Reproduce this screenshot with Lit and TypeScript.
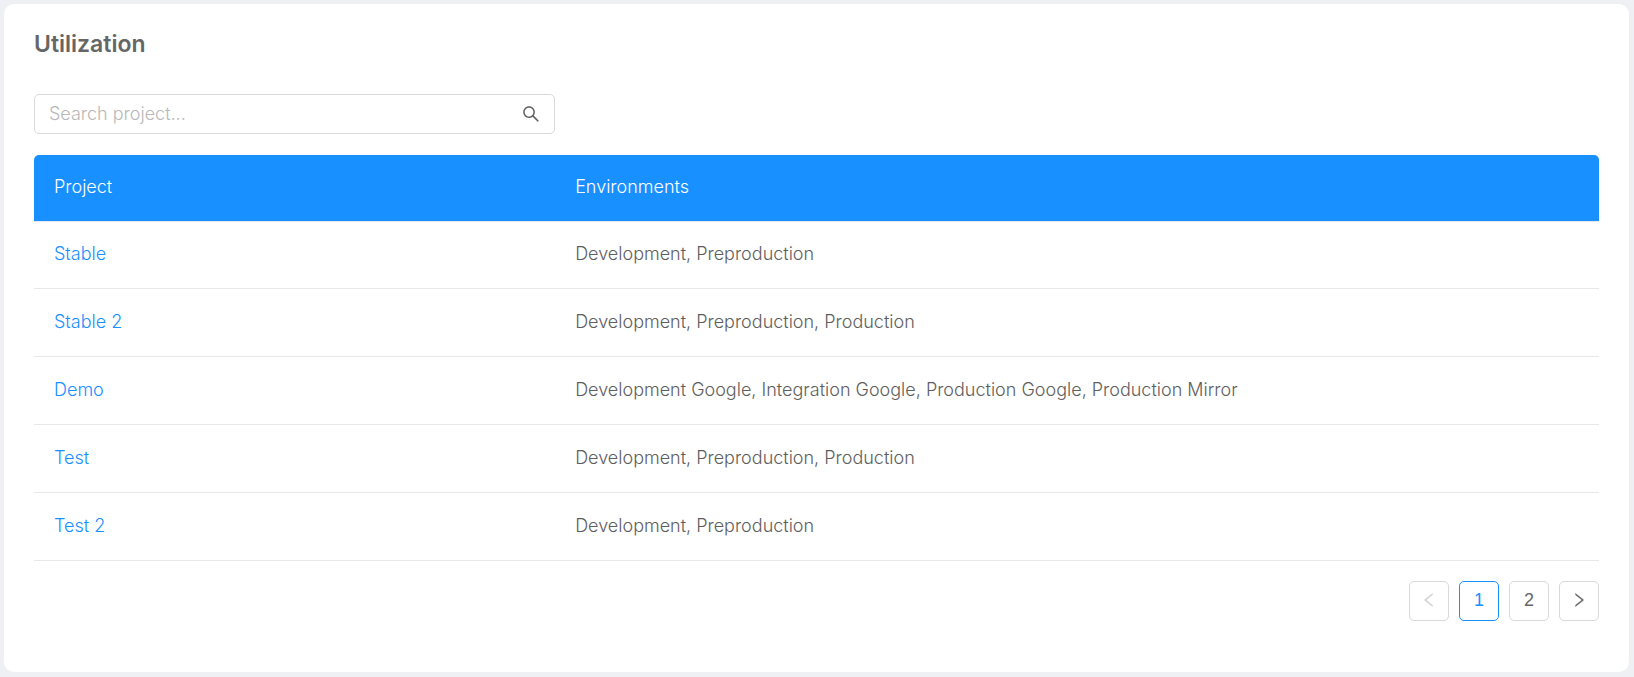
import { LitElement, html, css, svg } from "lit";
import { customElement, property, state } from "lit/decorators.js";

interface ProjectRow {
  name: string;
  environments: string[];
}

const PROJECTS: ProjectRow[] = [
  { name: "Stable", environments: ["Development", "Preproduction"] },
  { name: "Stable 2", environments: ["Development", "Preproduction", "Production"] },
  {
    name: "Demo",
    environments: [
      "Development Google",
      "Integration Google",
      "Production Google",
      "Production Mirror",
    ],
  },
  { name: "Test", environments: ["Development", "Preproduction", "Production"] },
  { name: "Test 2", environments: ["Development", "Preproduction"] },
];

const ICONS = {
  search: svg`<path d="M909.6 854.5L649.9 594.8C690.2 542.7 712 479 712 412c0-80.2-31.3-155.4-87.9-212.1-56.6-56.7-132-87.9-212.1-87.9s-155.5 31.3-212.1 87.9C143.2 256.5 112 331.8 112 412c0 80.1 31.3 155.5 87.9 212.1C256.5 680.8 331.8 712 412 712c67 0 130.6-21.8 182.7-62l259.7 259.6a8.2 8.2 0 0011.6 0l43.6-43.5a8.2 8.2 0 000-11.6zM570.4 570.4C528 612.7 471.8 636 412 636s-116-23.3-158.4-65.6C211.3 528 188 471.8 188 412s23.3-116.1 65.6-158.4C296 211.3 352.2 188 412 188s116.1 23.2 158.4 65.6S636 352.2 636 412s-23.3 116.1-65.6 158.4z"/>`,
  left: svg`<path d="M724 218.3V141c0-6.7-7.7-10.4-12.9-6.3L260.3 486.8a31.86 31.86 0 000 50.3l450.8 352.1c5.3 4.1 12.9.4 12.9-6.3v-77.3c0-4.9-2.3-9.6-6.1-12.6l-360-281 360-281.1c3.8-3 6.1-7.7 6.1-12.6z"/>`,
  right: svg`<path d="M765.7 486.8L314.9 134.7A7.97 7.97 0 00302 141v77.3c0 4.9 2.3 9.6 6.1 12.6l360 281.1-360 281.1c-3.9 3-6.1 7.7-6.1 12.6V883c0 6.7 7.7 10.4 12.9 6.3l450.8-352.1a31.96 31.96 0 000-50.4z"/>`,
};

@customElement("ui-icon")
export class UiIcon extends LitElement {
  @property() name: keyof typeof ICONS = "search";

  static styles = css`
    :host {
      display: inline-flex;
      width: 18px;
      height: 18px;
    }
    .glyph {
      width: 100%;
      height: 100%;
      fill: currentColor;
    }
  `;

  render() {
    return html`<svg class="glyph" viewBox="0 0 1024 1024" aria-hidden="true">
      ${ICONS[this.name]}
    </svg>`;
  }
}

@customElement("page-nav")
export class PageNav extends LitElement {
  @property({ type: Number }) pages = 1;
  @property({ type: Number }) current = 1;

  static styles = css`
    :host {
      display: block;
    }
    .pager {
      display: flex;
      justify-content: flex-end;
      gap: 10px;
    }
    .item {
      display: flex;
      align-items: center;
      justify-content: center;
      width: 40px;
      height: 40px;
      padding: 0 0 2px;
      box-sizing: border-box;
      border: 1px solid #d9d9d9;
      border-radius: 5px;
      background: #fff;
      color: #666;
      font: 18px/28px "Liberation Sans", Arial, sans-serif;
      cursor: pointer;
    }
    .item.active {
      border-color: #1890ff;
      color: #1890ff;
    }
    .item:disabled {
      color: #d0d0d0;
      cursor: not-allowed;
    }
  `;

  private go(page: number) {
    this.dispatchEvent(new CustomEvent("page-change", { detail: page }));
  }

  render() {
    const numbers = Array.from({ length: this.pages }, (_, i) => i + 1);
    return html`<nav class="pager" aria-label="Pagination">
      <button
        class="item"
        aria-label="Previous page"
        ?disabled=${this.current === 1}
        @click=${() => this.go(this.current - 1)}
      >
        <ui-icon name="left"></ui-icon>
      </button>
      ${numbers.map(
        (n) => html`<button
          class="item ${n === this.current ? "active" : ""}"
          @click=${() => this.go(n)}
        >${n}</button>`
      )}
      <button
        class="item"
        aria-label="Next page"
        ?disabled=${this.current === this.pages}
        @click=${() => this.go(this.current + 1)}
      >
        <ui-icon name="right"></ui-icon>
      </button>
    </nav>`;
  }
}

@customElement("app-root")
export class AppRoot extends LitElement {
  @state() private page = 1;
  @state() private query = "";

  static styles = css`
    :host {
      display: block;
      box-sizing: border-box;
      min-height: 100vh;
      padding: 4px 5px 5px 4px;
      background: #eff0f4;
      color: #5e5e5e;
      font: 300 18px/27px Inter, sans-serif;
    }
    .card {
      padding: 26px 30px 51px;
      border-radius: 10px;
      background: #fff;
    }
    .title {
      margin: 0 0 36px;
      color: #666;
      font-size: 23px;
      line-height: 28px;
      font-weight: 600;
    }
    .search {
      display: flex;
      align-items: center;
      box-sizing: border-box;
      width: 33.3%;
      height: 40px;
      margin-bottom: 21px;
      padding: 0 13px 0 14px;
      border: 1px solid #d9d9d9;
      border-radius: 5px;
    }
    .search:focus-within {
      border-color: #1890ff;
    }
    .field {
      flex: 1;
      min-width: 0;
      height: 28px;
      padding: 0 0 1px;
      border: 0;
      outline: 0;
      background: none;
      color: inherit;
      font: inherit;
    }
    .field::placeholder {
      color: #b8b8b8;
      opacity: 1;
    }
    .search-icon {
      width: 20px;
      height: 20px;
    }
    .table {
      width: 100%;
      margin-bottom: 20px;
      border-spacing: 0;
      table-layout: fixed;
    }
    .head,
    .cell {
      padding: 19px 20px 21px;
      text-align: left;
      font-weight: 300;
    }
    .head {
      padding-top: 18px;
      background: #1890ff;
      box-shadow: 0 1px #e8e8e8;
      color: #fff;
    }
    .head:first-child {
      width: 33.3%;
      box-sizing: border-box;
      border-top-left-radius: 5px;
    }
    .head:last-child {
      border-top-right-radius: 5px;
    }
    .cell {
      border-bottom: 1px solid #e8e8e8;
    }
    .link {
      color: #1890ff;
      text-decoration: none;
    }
  `;

  render() {
    const needle = this.query.toLowerCase();
    const rows = PROJECTS.filter((p) => p.name.toLowerCase().includes(needle));
    return html`<main class="card">
      <h1 class="title">Utilization</h1>
      <label class="search">
        <input
          class="field"
          type="text"
          aria-label="Search project"
          placeholder="Search project..."
          @input=${(e: InputEvent) => {
            this.query = (e.target as HTMLInputElement).value;
          }}
        />
        <ui-icon class="search-icon" name="search"></ui-icon>
      </label>
      <table class="table">
        <thead>
          <tr>
            <th class="head" scope="col">Project</th>
            <th class="head" scope="col">Environments</th>
          </tr>
        </thead>
        <tbody>
          ${rows.map(
            (row) => html`<tr>
              <td class="cell"><a class="link" href="#">${row.name}</a></td>
              <td class="cell">${row.environments.join(", ")}</td>
            </tr>`
          )}
        </tbody>
      </table>
      <page-nav
        .pages=${2}
        .current=${this.page}
        @page-change=${(e: CustomEvent<number>) => {
          this.page = e.detail;
        }}
      ></page-nav>
    </main>`;
  }
}
